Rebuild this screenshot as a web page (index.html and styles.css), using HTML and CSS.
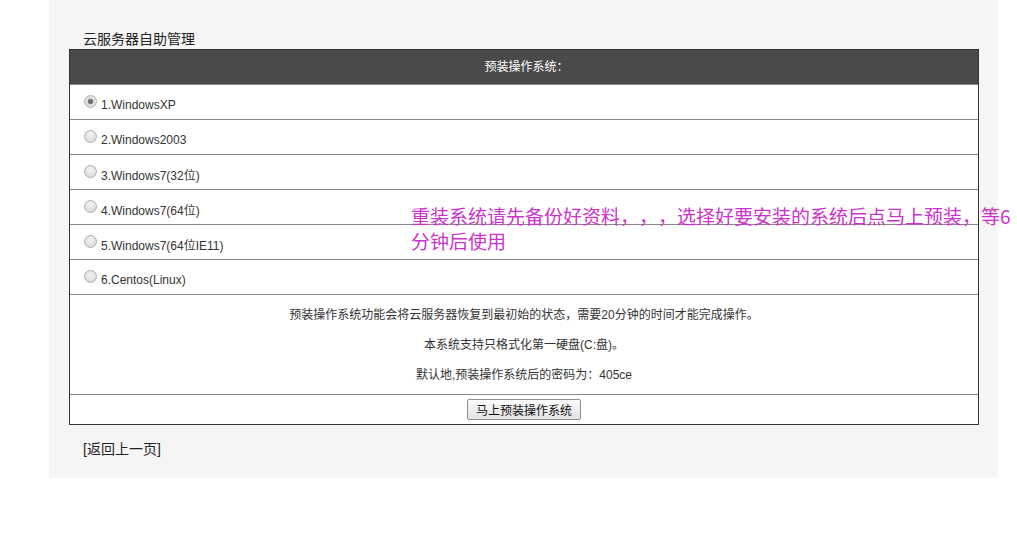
FILE: index.html
```html
<!DOCTYPE html>
<html lang="zh-CN">
<head>
<meta charset="utf-8">
<title>云服务器自助管理</title>
<link rel="stylesheet" href="styles.css">
</head>
<body>
<div class="panel">
  <div class="title">云服务器自助管理</div>
  <div class="box">
    <div class="head">预装操作系统：</div>
    <label class="row"><input type="radio" name="os" checked><span>1.WindowsXP</span></label>
    <label class="row"><input type="radio" name="os"><span>2.Windows2003</span></label>
    <label class="row"><input type="radio" name="os"><span>3.Windows7(32位)</span></label>
    <label class="row"><input type="radio" name="os"><span>4.Windows7(64位)</span></label>
    <label class="row"><input type="radio" name="os"><span>5.Windows7(64位IE11)</span></label>
    <label class="row"><input type="radio" name="os"><span>6.Centos(Linux)</span></label>
    <div class="info">
      <p>预装操作系统功能会将云服务器恢复到最初始的状态，需要20分钟的时间才能完成操作。</p>
      <p>本系统支持只格式化第一硬盘(C:盘)。</p>
      <p>默认地,预装操作系统后的密码为：405ce</p>
    </div>
    <div class="actions"><button class="btn" type="button">马上预装操作系统</button></div>
  </div>
  <a class="back" href="#">[返回上一页]</a>
</div>
<div class="notice">重装系统请先备份好资料，，，选择好要安装的系统后点马上预装，等6分钟后使用</div>
</body>
</html>
```

FILE: styles.css
```css
html, body {
  margin: 0;
  padding: 0;
  background: #fff;
}
body {
  font-family: "Liberation Sans", "Noto Sans CJK SC", sans-serif;
  color: #333;
  position: relative;
  width: 1017px;
  height: 551px;
  overflow: hidden;
  text-spacing-trim: space-all;
}
.panel {
  margin-left: 49px;
  width: 949px;
  height: 478px;
  box-sizing: border-box;
  padding: 31px 0 0 20px;
  background: #f5f5f5;
}
.title {
  font-size: 14px;
  line-height: 18px;
  height: 18px;
  padding-left: 14px;
  color: #222;
  margin-top: -1px;
  margin-bottom: 1px;
}
.box {
  width: 910px;
  box-sizing: border-box;
  border: 1px solid #333;
  background: #fff;
  display: flex;
  flex-direction: column;
}
.head {
  height: 34px;
  line-height: 34px;
  background: #4a4a4a;
  color: #fff;
  font-size: 12px;
  text-align: center;
  border-bottom: 1px solid #888;
  padding-left: 5px;
}
.row {
  height: 34px;
  border-bottom: 1px solid #888;
  display: flex;
  align-items: center;
  padding-left: 14px;
  font-size: 12px;
  color: #333;
}
.row input {
  appearance: none;
  -webkit-appearance: none;
  width: 13px;
  height: 13px;
  margin: -2px 4px 0 0;
  border-radius: 50%;
  border: 1px solid #b0b0b0;
  box-sizing: border-box;
  background: radial-gradient(circle at 50% 35%, #f4f4f4 0%, #dcdcdc 70%, #cfcfcf 100%);
}
.row input:checked {
  background: radial-gradient(circle, #666 0, #777 2.5px, #dcdcdc 3px, #e6e6e6 100%);
}
.row span {
  margin-top: 5px;
}
.info {
  padding: 5px 0 4px;
  border-bottom: 1px solid #888;
  font-size: 12px;
  text-align: center;
  color: #333;
}
.info p {
  margin: 0;
  line-height: 30px;
  height: 30px;
}
.actions {
  height: 29px;
  display: flex;
  align-items: center;
  justify-content: center;
}
.btn {
  height: 21px;
  padding: 0 8px;
  font-family: "Noto Sans CJK SC", sans-serif;
  font-size: 12px;
  line-height: 19px;
  color: #111;
  border: 1px solid #8f8f8f;
  border-radius: 2px;
  background: linear-gradient(#fbfbfb, #e3e3e3);
}
.back {
  display: inline-block;
  margin: 15px 0 0 14px;
  font-size: 14px;
  line-height: 18px;
  color: #222;
  text-decoration: none;
}
.notice {
  position: absolute;
  left: 411px;
  top: 203px;
  width: 606px;
  font-family: "Noto Sans CJK SC", sans-serif;
  font-size: 19px;
  line-height: 25px;
  color: #cc33cc;
}
```
